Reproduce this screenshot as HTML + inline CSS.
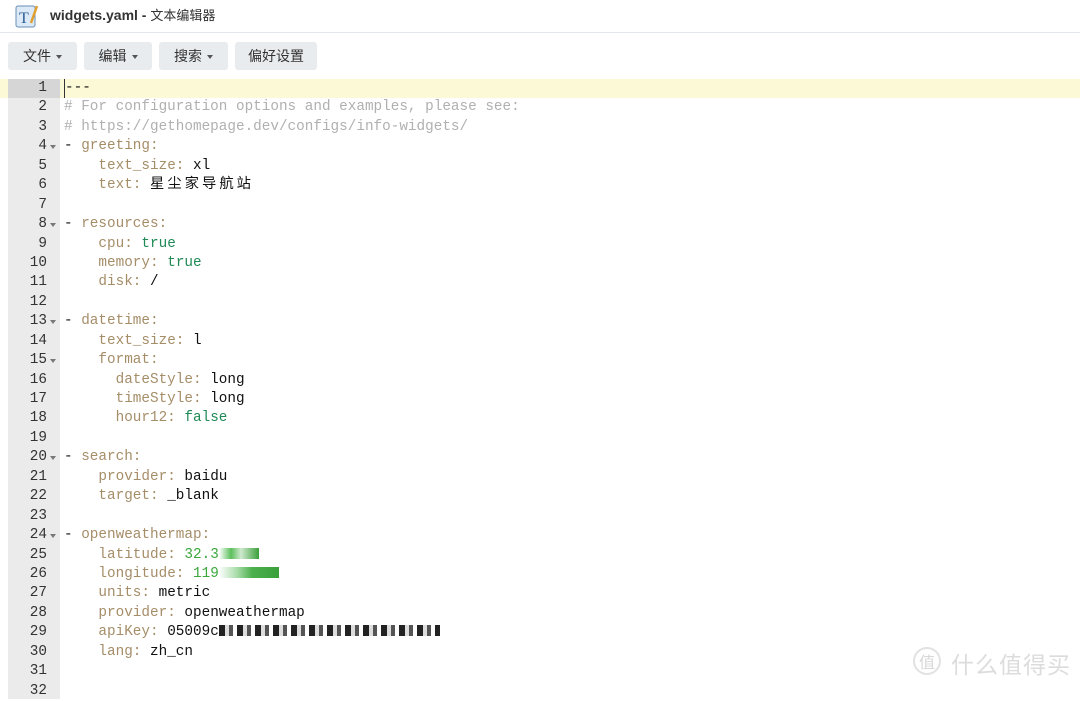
<!DOCTYPE html>
<html><head><meta charset="utf-8"><style>
body{margin:0;width:1080px;height:687px;overflow:hidden;background:#fff;font-family:"Liberation Sans","Noto Sans CJK SC",sans-serif;position:relative}
.title{position:absolute;left:0;top:0;width:1080px;height:32px;border-bottom:1px solid #e3e6ea}
.title .t{position:absolute;left:50px;top:5px;font-size:14px;color:#333;font-weight:bold}
.title .t span{font-weight:normal;font-size:13px}
.btn{position:absolute;top:42px;height:28px;background:#e9ecef;border-radius:3px;font-size:14px;color:#333;line-height:28px;text-align:center}
.car{display:inline-block;width:0;height:0;border-left:3px solid transparent;border-right:3px solid transparent;border-top:4px solid #555;vertical-align:middle;margin-left:5px}
.gut{position:absolute;left:8px;top:79px;width:52px;height:620px;background:#ebebeb}
.code{position:absolute;left:0;top:79px;width:1080px;font-family:"Liberation Mono","Noto Sans CJK SC",monospace;font-size:14.33px;line-height:19.45px}
.ln{height:19.45px;position:relative;white-space:pre}
.ln .n{position:absolute;left:8px;width:39px;text-align:right;color:#333}
.ln .f{position:absolute;left:50px;top:8px;border-left:3px solid transparent;border-right:3px solid transparent;border-top:4px solid #777}
.ln .c{position:absolute;left:64px;color:#111}
.k{color:#a58d68}.g{color:#1f8a55}.num{color:#3ca83c}.ln .cm{color:#b0b0b0}
.cjk{letter-spacing:3px}
.act{background:#fcf9d6}
.blur{display:inline-block;height:11px;vertical-align:-1px}
</style></head><body>
<div class="title">
<svg style="position:absolute;left:15px;top:3px" width="24" height="26" viewBox="0 0 24 26"><rect x="1" y="3" width="19" height="21" rx="2" fill="#dceaf7" stroke="#6a8fb5"/><text x="4" y="20" font-size="16" font-family="Liberation Serif" fill="#2b5d97">T</text><path d="M16 20 L22 3" stroke="#e0a030" stroke-width="2.5"/></svg>
<div class="t">widgets.yaml - <span>文本编辑器</span></div>
</div>
<div class="btn" style="left:8px;width:69px">文件<i class="car"></i></div>
<div class="btn" style="left:84px;width:68px">编辑<i class="car"></i></div>
<div class="btn" style="left:159px;width:69px">搜索<i class="car"></i></div>
<div class="btn" style="left:235px;width:82px">偏好设置</div>
<div class="gut"></div>
<div class="code">
<div class="ln act"><span style="position:absolute;left:8px;width:52px;height:19.45px;background:#d6d6d6"></span><span class="n">1</span><span class="c" style="border-left:1px solid #333">---</span></div>
<div class="ln"><span class="n">2</span><span class="c cm"># For configuration options and examples, please see:</span></div>
<div class="ln"><span class="n">3</span><span class="c cm"># https://gethomepage.dev/configs/info-widgets/</span></div>
<div class="ln"><span class="n">4</span><i class="f"></i><span class="c">- <span class="k">greeting:</span></span></div>
<div class="ln"><span class="n">5</span><span class="c">    <span class="k">text_size:</span> xl</span></div>
<div class="ln"><span class="n">6</span><span class="c">    <span class="k">text:</span> <span class="cjk">星尘家导航站</span></span></div>
<div class="ln"><span class="n">7</span></div>
<div class="ln"><span class="n">8</span><i class="f"></i><span class="c">- <span class="k">resources:</span></span></div>
<div class="ln"><span class="n">9</span><span class="c">    <span class="k">cpu:</span> <span class="g">true</span></span></div>
<div class="ln"><span class="n">10</span><span class="c">    <span class="k">memory:</span> <span class="g">true</span></span></div>
<div class="ln"><span class="n">11</span><span class="c">    <span class="k">disk:</span> /</span></div>
<div class="ln"><span class="n">12</span></div>
<div class="ln"><span class="n">13</span><i class="f"></i><span class="c">- <span class="k">datetime:</span></span></div>
<div class="ln"><span class="n">14</span><span class="c">    <span class="k">text_size:</span> l</span></div>
<div class="ln"><span class="n">15</span><i class="f"></i><span class="c">    <span class="k">format:</span></span></div>
<div class="ln"><span class="n">16</span><span class="c">      <span class="k">dateStyle:</span> long</span></div>
<div class="ln"><span class="n">17</span><span class="c">      <span class="k">timeStyle:</span> long</span></div>
<div class="ln"><span class="n">18</span><span class="c">      <span class="k">hour12:</span> <span class="g">false</span></span></div>
<div class="ln"><span class="n">19</span></div>
<div class="ln"><span class="n">20</span><i class="f"></i><span class="c">- <span class="k">search:</span></span></div>
<div class="ln"><span class="n">21</span><span class="c">    <span class="k">provider:</span> baidu</span></div>
<div class="ln"><span class="n">22</span><span class="c">    <span class="k">target:</span> _blank</span></div>
<div class="ln"><span class="n">23</span></div>
<div class="ln"><span class="n">24</span><i class="f"></i><span class="c">- <span class="k">openweathermap:</span></span></div>
<div class="ln"><span class="n">25</span><span class="c">    <span class="k">latitude:</span> <span class="num">32.3</span><span class="blur" style="width:40px;background:linear-gradient(90deg,#fff,#5cc05c 30%,#cfe9cf 55%,#3aa03a)"></span></span></div>
<div class="ln"><span class="n">26</span><span class="c">    <span class="k">longitude:</span> <span class="num">119</span><span class="blur" style="width:60px;background:linear-gradient(90deg,#fff,#a8dca8 30%,#4cb04c 55%,#3aa03a)"></span></span></div>
<div class="ln"><span class="n">27</span><span class="c">    <span class="k">units:</span> metric</span></div>
<div class="ln"><span class="n">28</span><span class="c">    <span class="k">provider:</span> openweathermap</span></div>
<div class="ln"><span class="n">29</span><span class="c">    <span class="k">apiKey:</span> 05009c<span class="blur" style="width:221px;background:repeating-linear-gradient(90deg,#222 0 6px,#ddd 6px 10px,#555 10px 14px,#fff 14px 18px)"></span></span></div>
<div class="ln"><span class="n">30</span><span class="c">    <span class="k">lang:</span> zh_cn</span></div>
<div class="ln"><span class="n">31</span></div>
<div class="ln"><span class="n">32</span></div>
</div>
<div style="position:absolute;left:913px;top:647px;width:28px;height:28px;border:2px solid #e2e2e2;border-radius:50%;box-sizing:border-box;color:#d8d8d8;font-size:16px;line-height:24px;text-align:center;font-family:'Noto Sans CJK SC',sans-serif">值</div>
<div style="position:absolute;left:951px;top:646px;color:#dcdcdc;font-size:23px;font-family:'Noto Sans CJK SC',sans-serif;letter-spacing:1px">什么值得买</div>
</body></html>
